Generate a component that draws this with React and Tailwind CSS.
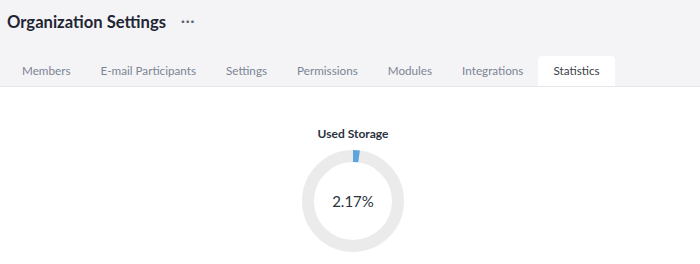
import React from "react";

const tabs = ["Members", "E-mail Participants", "Settings", "Permissions", "Modules", "Integrations", "Statistics"];

function Donut({ value }) {
  const r = 45;
  const c = 2 * Math.PI * r;
  return (
    <div className="relative w-[104px] h-[104px]">
      <svg width="104" height="104" viewBox="0 0 104 104" className="-rotate-90">
        <circle cx="52" cy="52" r={r} fill="none" stroke="#ebebeb" strokeWidth="12" />
        <circle
          cx="52"
          cy="52"
          r={r}
          fill="none"
          stroke="#5fa5dd"
          strokeWidth="12"
          strokeDasharray={`${(c * value) / 100} ${c}`}
        />
      </svg>
      <div className="absolute inset-0 flex items-center justify-center text-[15px] text-[#2b3240]">
        {value}%
      </div>
    </div>
  );
}

export default function App() {
  return (
    <div className="w-[700px] h-[264px] bg-white overflow-hidden font-['Lato',sans-serif]">
      <div className="bg-[#f4f4f6] border-b border-[#e6e6ea]">
        <div className="h-[45px] flex items-center px-[7px] gap-[15px]">
          <h1 className="text-[16.6px] font-bold text-[#1f2533]">Organization Settings</h1>
          <span className="text-[#5b6270] text-[14px] leading-none -mt-[4px] tracking-[1px] font-bold">···</span>
        </div>
        <div className="flex px-[7px] pt-[11px]">
          {tabs.map((t) => (
            <div
              key={t}
              className={
                t === "Statistics"
                  ? "h-[30px] px-[15px] flex items-center text-[11.7px] bg-white rounded-t-[4px] text-[#3a3f48]"
                  : "h-[30px] px-[15px] flex items-center text-[11.7px] text-[#7b8594]"
              }
            >
              {t}
            </div>
          ))}
        </div>
      </div>
      <div className="flex flex-col items-center pt-[38px] pl-[6px]">
        <div className="text-[12px] font-bold text-[#2b3240] mb-[6px]">Used Storage</div>
        <Donut value={2.17} />
      </div>
    </div>
  );
}
